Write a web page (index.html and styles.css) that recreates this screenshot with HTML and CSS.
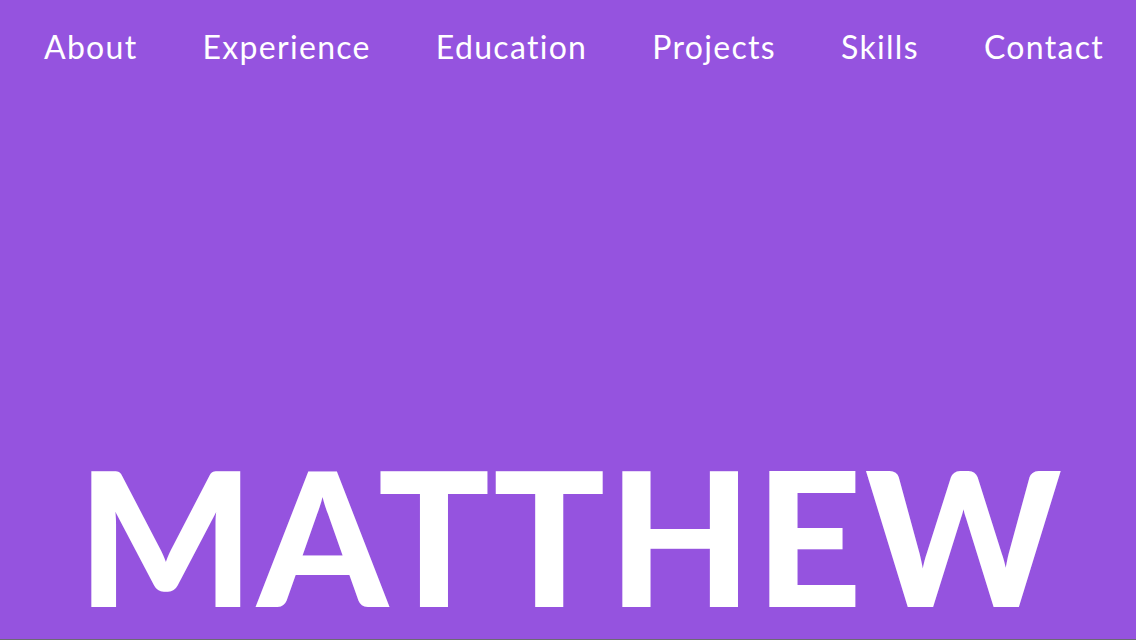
FILE: index.html
```html
<!DOCTYPE html>
<html>
<head>
<meta charset="utf-8">
<link rel="stylesheet" href="styles.css">
</head>
<body>
<div class="page">
  <nav class="nav">
    <a class="nav-link" href="#">About</a>
    <a class="nav-link" href="#">Experience</a>
    <a class="nav-link" href="#">Education</a>
    <a class="nav-link" href="#">Projects</a>
    <a class="nav-link" href="#">Skills</a>
    <a class="nav-link" href="#">Contact</a>
  </nav>
  <header class="hero">
    <h1 class="hero-title">MATTHEW</h1>
  </header>
</div>
</body>
</html>
```

FILE: styles.css
```css
html, body {
  margin: 0;
  padding: 0;
  background: #9553df;
}
.page {
  height: 639px;
  border-bottom: 1px solid #6d6a72;
  display: flex;
  flex-direction: column;
}
.nav {
  display: flex;
  justify-content: space-between;
  align-items: center;
  height: 92px;
  padding: 0 32px 0 44px;
}
.nav-link {
  color: #ffffff;
  text-decoration: none;
  font-family: Lato, "Open Sans", sans-serif;
  font-weight: 400;
  font-size: 32px;
  letter-spacing: 1.3px;
}
.hero {
  flex: 1;
  display: flex;
  align-items: flex-end;
  justify-content: center;
  padding-left: 6px;
}
.hero-title {
  margin: 0 0 1px 0;
  color: #ffffff;
  font-family: Lato, sans-serif;
  font-weight: 900;
  font-size: 186px;
  line-height: 1.1;
  letter-spacing: 3px;
}
```
